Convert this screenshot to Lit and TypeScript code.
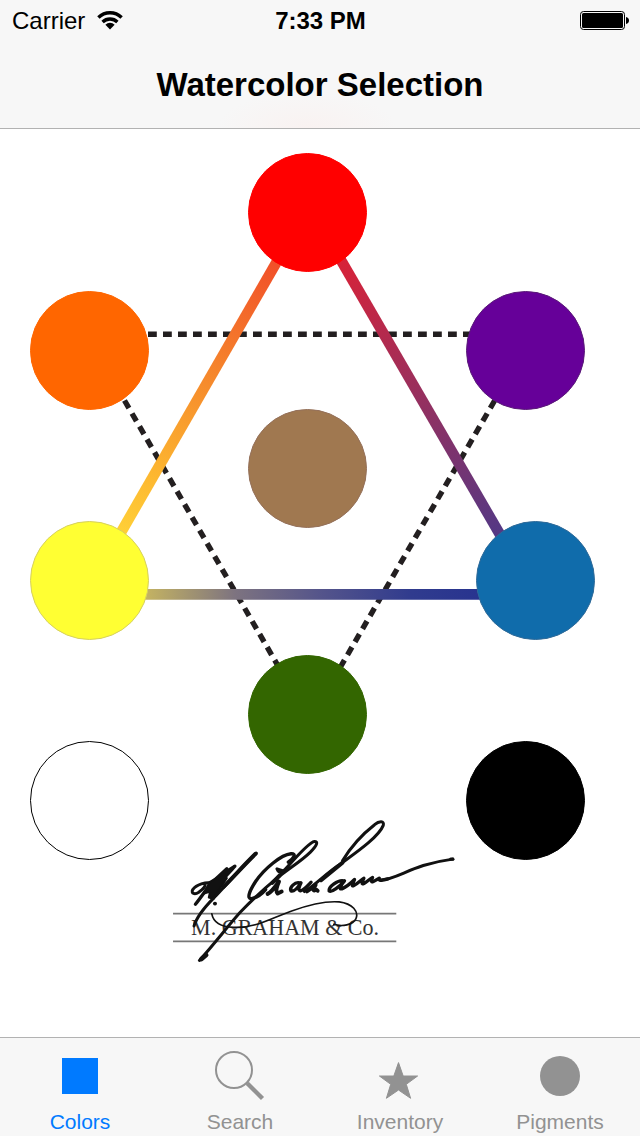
import { LitElement, html, css, svg } from "lit";
import { customElement, property, state } from "lit/decorators.js";
import { classMap } from "lit/directives/class-map.js";
import { styleMap } from "lit/directives/style-map.js";

interface Swatch {
  name: string;
  color: string;
  edge: string;
  x: number;
  y: number;
}

// Swatch centres, in the units of the wheel drawing.
const WHEEL_WIDTH = 640;
const WHEEL_HEIGHT = 908;
const SWATCH_SIZE = 119;

const SWATCHES: Swatch[] = [
  { name: "Red", color: "#ff0000", edge: "#ff0000", x: 307.5, y: 83 },
  { name: "Orange", color: "#ff6600", edge: "#ff6600", x: 89.5, y: 221 },
  { name: "Purple", color: "#660099", edge: "#5a1a78", x: 525.5, y: 221 },
  { name: "Brown", color: "#a07850", edge: "#94705a", x: 307.5, y: 339 },
  { name: "Yellow", color: "#ffff33", edge: "#d6d060", x: 89.5, y: 451 },
  { name: "Blue", color: "#106cab", edge: "#2f6a98", x: 535.5, y: 451 },
  { name: "Green", color: "#336600", edge: "#336600", x: 307.5, y: 585 },
  { name: "White", color: "#ffffff", edge: "#000000", x: 89.5, y: 671 },
  { name: "Black", color: "#000000", edge: "#000000", x: 525.5, y: 671 },
];

const TABS = [
  {
    name: "Colors",
    icon: svg`<rect x="8" y="8" width="36" height="36" fill="currentColor"/>`,
  },
  {
    name: "Search",
    icon: svg`<circle cx="20" cy="20" r="18" fill="none" stroke="currentColor" stroke-width="2"/>
      <path d="M33.2 33.2 48.500 48.500" stroke="currentColor" stroke-width="4.4"/>`,
  },
  {
    name: "Inventory",
    icon: svg`<path fill="currentColor" stroke="currentColor" stroke-width="1" stroke-linejoin="round"
      d="M24.5 12.6 29.2 26H43.6L32.3 34.3 36.6 48.3 24.5 40 12.4 48.3 16.7 34.3 5.4 26H19.8Z"/>`,
  },
  {
    name: "Pigments",
    icon: svg`<circle cx="26" cy="26" r="20" fill="currentColor"/>`,
  },
];

@customElement("status-bar")
class StatusBar extends LitElement {
  static styles = css`
    :host {
      display: grid;
      grid-template-columns: 1fr auto 1fr;
      align-items: center;
      height: 42px;
      padding: 0 11px 0 12px;
      font-size: 24px;
      line-height: 42px;
    }
    .carrier {
      display: flex;
      align-items: center;
      gap: 12px;
    }
    .time {
      font-weight: 700;
    }
    .battery {
      justify-self: end;
    }
    svg {
      display: block;
    }
  `;

  render() {
    return html`
      <div class="carrier">
        <span>Carrier</span>
        <svg width="26" height="20" viewBox="0 0 26 20" role="img" aria-label="Wi-Fi">
          <g fill="none" stroke="#000" stroke-width="3.4">
            <path d="M1.4 6.500A16.500 16.500 0 0 1 24.6 6.500" />
            <path d="M5.6 11A10.700 10.700 0 0 1 20.4 11" />
          </g>
          <path d="M13 18.400 8.400 13.700A6.600 6.600 0 0 1 17.600 13.700Z" />
        </svg>
      </div>
      <div class="time">7:33 PM</div>
      <svg class="battery" width="49" height="20" viewBox="0 0 49 20" role="img" aria-label="Battery full">
        <rect x="0.5" y="0.5" width="44" height="18" rx="3" fill="none" stroke="#000" />
        <rect x="2" y="2" width="41" height="15" rx="1.5" />
        <path d="M46 6c2 .5 3 1.800 3 3.500s-1 3-3 3.500Z" />
      </svg>
    `;
  }
}

@customElement("maker-logo")
class MakerLogo extends LitElement {
  static styles = css`
    :host {
      display: block;
    }
    svg {
      display: block;
      width: 100%;
    }
    .name {
      font-family: "Liberation Serif", "Times New Roman", serif;
      font-size: 66px;
      fill: #333;
    }
    .rule {
      stroke: #777;
      stroke-width: 5;
    }
    .ink {
      fill: none;
      stroke: #111;
      stroke-linecap: round;
      stroke-linejoin: round;
    }
    .blot {
      fill: #111;
    }
  `;

  render() {
    return html`
      <svg viewBox="0 0 900 480" role="img" aria-label="M. Graham &amp; Co.">
        <path class="rule" d="M39 310H707M39 393H707" />
        <text class="name" x="93" y="375">M. GRAHAM &amp; Co.</text>
        <g class="ink">
          <path stroke-width="9" d="M150 218C138 216 110 222 98 238C92 250 104 254 116 246C130 236 138 226 134 220" />
          <path stroke-width="10" d="M106 282C122 262 134 244 150 222L200 176M134 244C160 216 196 184 224 168C212 182 190 204 176 222" />
          <path class="blot" stroke-width="6" d="M148 216 192 190 200 204 176 240 160 266 146 262 150 244 132 250Z" />
          <path stroke-width="9" d="M102 347C110 318 134 290 162 262C200 222 240 176 288 129" />
          <path stroke-width="12" d="M190 230C220 200 256 160 286 131" />
          <path stroke-width="11" d="M164 280h1" />
          <path stroke-width="9" d="M118 450C160 404 204 346 240 306C276 268 316 232 350 204C384 176 424 152 450 126C470 106 474 94 462 94C446 96 404 144 376 176C364 190 356 190 350 176L374 184" />
          <path stroke-width="14" d="M124 446 138 434" />
          <path stroke-width="10" d="M384 156C400 144 410 130 392 131C362 134 312 176 286 214C268 242 258 266 274 265C290 262 304 252 316 238" />
          <path stroke-width="12" d="M336 218 358 196M322 251C336 244 344 230 356 214C350 228 344 244 352 250L364 244" />
          <path stroke-width="10" d="M418 218C404 214 386 232 392 242C402 246 414 230 422 218C416 230 412 240 420 242C432 240 440 228 452 216" />
          <path stroke-width="9" d="M432 244C466 224 500 186 542 160C580 132 654 82 668 46C672 32 656 32 642 44C606 72 570 112 546 152" />
          <path stroke-width="12" d="M482 210 546 158" />
          <path stroke-width="11" d="M440 244C450 238 458 230 466 224C458 238 456 246 468 238L472 242" />
          <path stroke-width="10" d="M550 212C532 208 504 230 506 242C514 248 538 228 552 212C540 226 534 238 544 236C558 230 572 218 582 208C576 222 572 230 580 226C592 220 602 208 610 204C604 216 602 224 610 220C620 214 628 206 636 202C630 214 632 218 642 212L656 204C654 212 658 212 682 206" />
          <path stroke-width="9" d="M660 210C720 204 750 164 876 147" />
          <path stroke-width="10" d="M870 147h6" />
          <path stroke-width="5" d="M155 311C160 338 182 350 220 351C286 354 330 324 394 302C450 282 500 272 536 275C576 280 596 304 586 326C578 344 544 350 520 342" />
        </g>
      </svg>
    `;
  }
}

@customElement("color-wheel")
class ColorWheel extends LitElement {
  static styles = css`
    :host {
      display: block;
      width: 100%;
      max-width: 640px;
    }
    .canvas {
      position: relative;
      aspect-ratio: 640 / 908;
    }
    .lines {
      display: block;
      width: 100%;
    }
    .dashed {
      fill: none;
      stroke: #231f20;
      stroke-width: 5.4;
      stroke-dasharray: 8.8 6.2;
    }
    .solid {
      fill: none;
      stroke-width: 10.7;
    }
    .swatch {
      position: absolute;
      box-sizing: border-box;
      aspect-ratio: 1;
      margin: 0;
      padding: 0;
      border: 1px solid;
      border-radius: 50%;
      cursor: pointer;
    }
    .logo {
      position: absolute;
      left: 25%;
      top: 75%;
      width: 47%;
    }
  `;

  private place(s: Swatch) {
    const half = SWATCH_SIZE / 2;
    return {
      left: `${((s.x - half) / WHEEL_WIDTH) * 100}%`,
      top: `${((s.y - half) / WHEEL_HEIGHT) * 100}%`,
      width: `${(SWATCH_SIZE / WHEEL_WIDTH) * 100}%`,
      background: s.color,
      borderColor: s.edge,
    };
  }

  render() {
    return html`
      <div class="canvas">
        <svg class="lines" viewBox="0 0 640 908" aria-hidden="true">
          <defs>
            <linearGradient id="warm" gradientUnits="userSpaceOnUse" x1="276" y1="134" x2="120" y2="405">
              <stop offset="0" stop-color="#f15029" />
              <stop offset="0.45" stop-color="#f68c2c" />
              <stop offset="0.8" stop-color="#fdb931" />
              <stop offset="1" stop-color="#ffd037" />
            </linearGradient>
            <linearGradient id="cool" gradientUnits="userSpaceOnUse" x1="340" y1="130" x2="501" y2="407">
              <stop offset="0" stop-color="#d82238" />
              <stop offset="0.5" stop-color="#96305f" />
              <stop offset="1" stop-color="#533885" />
            </linearGradient>
            <linearGradient id="base" gradientUnits="userSpaceOnUse" x1="146" y1="0" x2="478" y2="0">
              <stop offset="0" stop-color="#c4b362" />
              <stop offset="0.27" stop-color="#7d7380" />
              <stop offset="0.53" stop-color="#54548b" />
              <stop offset="0.8" stop-color="#303b8e" />
              <stop offset="1" stop-color="#28348f" />
            </linearGradient>
          </defs>
          <path class="dashed" d="M148 205.300H470" />
          <path class="dashed" d="M124.500 271.500 282.700 545" />
          <path class="dashed" d="M494.700 271.500 336.400 545" />
          <path class="solid" stroke="url(#warm)" d="M302 89 93 452" />
          <path class="solid" stroke="url(#cool)" d="M316.500 89 520 440" />
          <path class="solid" stroke="url(#base)" d="M90 465.300H535" />
        </svg>
        ${SWATCHES.map(
          (s) => html`<button class="swatch" aria-label=${s.name} style=${styleMap(this.place(s))}></button>`
        )}
        <maker-logo class="logo"></maker-logo>
      </div>
    `;
  }
}

@customElement("tab-bar")
class TabBar extends LitElement {
  @property() selected = "Colors";

  static styles = css`
    :host {
      display: block;
    }
    .tabs {
      display: grid;
      grid-template-columns: repeat(4, 1fr);
      border-top: 1px solid #b2b2b2;
      background: #f7f7f7;
    }
    .tab {
      display: flex;
      flex-direction: column;
      align-items: center;
      gap: 8px;
      height: 98px;
      padding: 12px 0 0;
      border: 0;
      background: none;
      color: #929292;
      font-family: "Liberation Sans", Arial, sans-serif;
      font-size: 21px;
      line-height: 24px;
      cursor: pointer;
    }
    .active {
      color: #007aff;
    }
    .icon {
      display: block;
    }
  `;

  private pick(name: string) {
    this.dispatchEvent(new CustomEvent("tab-select", { detail: name }));
  }

  render() {
    return html`
      <nav class="tabs">
        ${TABS.map(
          (t) => html`
            <button
              class=${classMap({ tab: true, active: t.name === this.selected })}
              @click=${() => this.pick(t.name)}
            >
              <svg class="icon" width="52" height="52" viewBox="0 0 52 52" aria-hidden="true">${t.icon}</svg>
              <span>${t.name}</span>
            </button>
          `
        )}
      </nav>
    `;
  }
}

@customElement("app-root")
class AppRoot extends LitElement {
  @state() private tab = "Colors";

  static styles = css`
    :host {
      display: flex;
      flex-direction: column;
      min-height: 100vh;
      background: #fff;
      color: #000;
      font-family: "Liberation Sans", Arial, sans-serif;
    }
    .header {
      border-bottom: 1px solid #b2b2b2;
      background: radial-gradient(ellipse 90px 36px at 48% 100%, #f9f2f1, #f7f7f7);
    }
    .title {
      margin: 0;
      padding: 19px 16px;
      text-align: center;
      font-size: 33px;
      line-height: 48px;
      font-weight: 700;
    }
    .content {
      flex: 1;
      display: flex;
      justify-content: center;
    }
  `;

  render() {
    return html`
      <header class="header">
        <status-bar></status-bar>
        <h1 class="title">Watercolor Selection</h1>
      </header>
      <main class="content">
        <color-wheel></color-wheel>
      </main>
      <tab-bar
        .selected=${this.tab}
        @tab-select=${(e: CustomEvent<string>) => (this.tab = e.detail)}
      ></tab-bar>
    `;
  }
}
